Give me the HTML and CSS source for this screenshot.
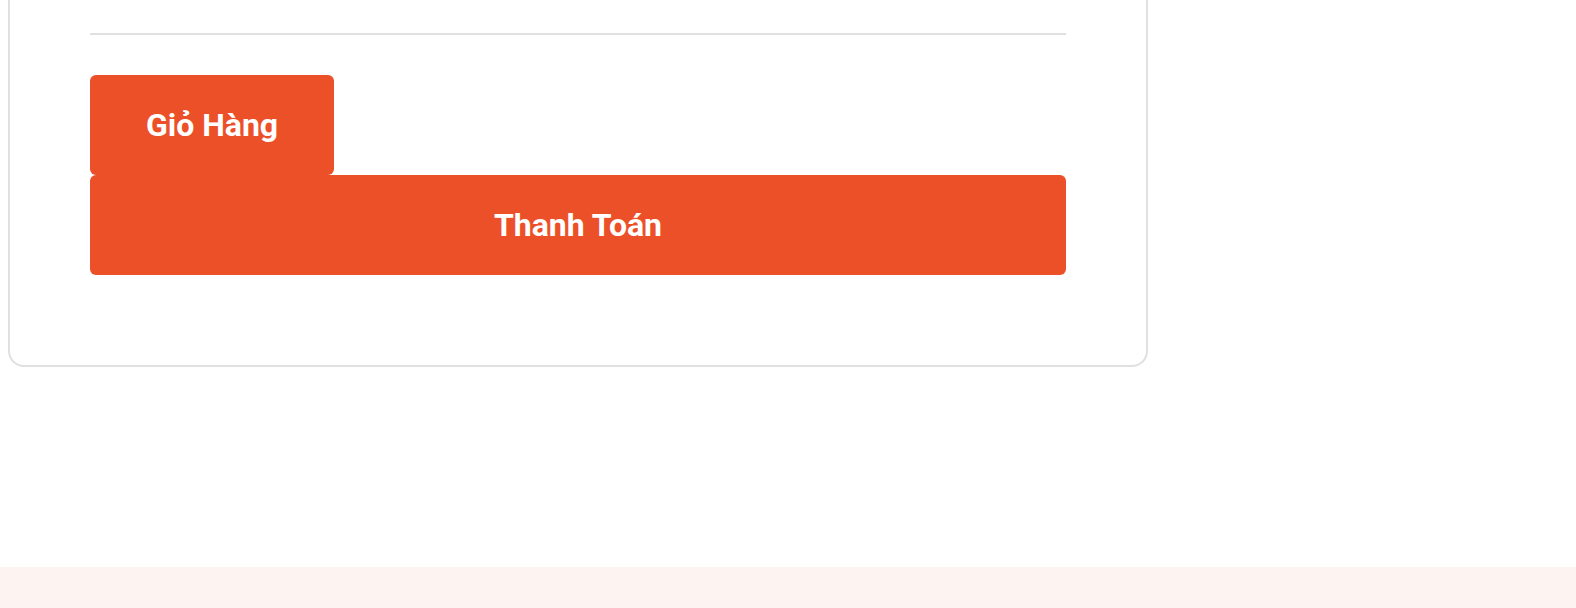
FILE: index.html
```html
<!DOCTYPE html>
<html lang="vi">
<head>
<meta charset="utf-8">
<title>Giỏ Hàng</title>
<link rel="stylesheet" href="styles.css">
</head>
<body>
<main class="page">
  <section class="card">
    <hr class="divider">
    <div class="actions">
      <button class="btn btn-cart" type="button">Giỏ Hàng</button>
      <button class="btn btn-checkout" type="button">Thanh Toán</button>
    </div>
  </section>
</main>
<footer class="footer"></footer>
</body>
</html>
```

FILE: styles.css
```css
html, body {
  margin: 0;
  padding: 0;
  background: #ffffff;
  font-family: Roboto, "Liberation Sans", Arial, sans-serif;
}

.page {
  height: 567px;
  box-sizing: border-box;
  padding-left: 8px;
  overflow: hidden;
}

.card {
  width: 1140px;
  box-sizing: border-box;
  border: 2px solid #e0e0e0;
  border-top: none;
  border-radius: 0 0 16px 16px;
  padding: 33px 80px 90px;
  background: #ffffff;
}

.divider {
  margin: 0 0 40px;
  border: none;
  height: 2px;
  background: #e0e0e0;
}

.actions {
  display: flex;
  flex-direction: column;
  align-items: flex-start;
}

.btn {
  display: flex;
  align-items: center;
  justify-content: center;
  height: 100px;
  border: none;
  border-radius: 6px;
  background: #ec5028;
  color: #ffffff;
  font-family: Roboto, "Liberation Sans", Arial, sans-serif;
  font-weight: 700;
  font-size: 32px;
  padding: 0 40px;
  margin: 0;
  cursor: pointer;
}

.btn-cart {
  width: 244px;
}

.btn-checkout {
  width: 100%;
}

.footer {
  height: 41px;
  background: #fdf3f0;
}
```
